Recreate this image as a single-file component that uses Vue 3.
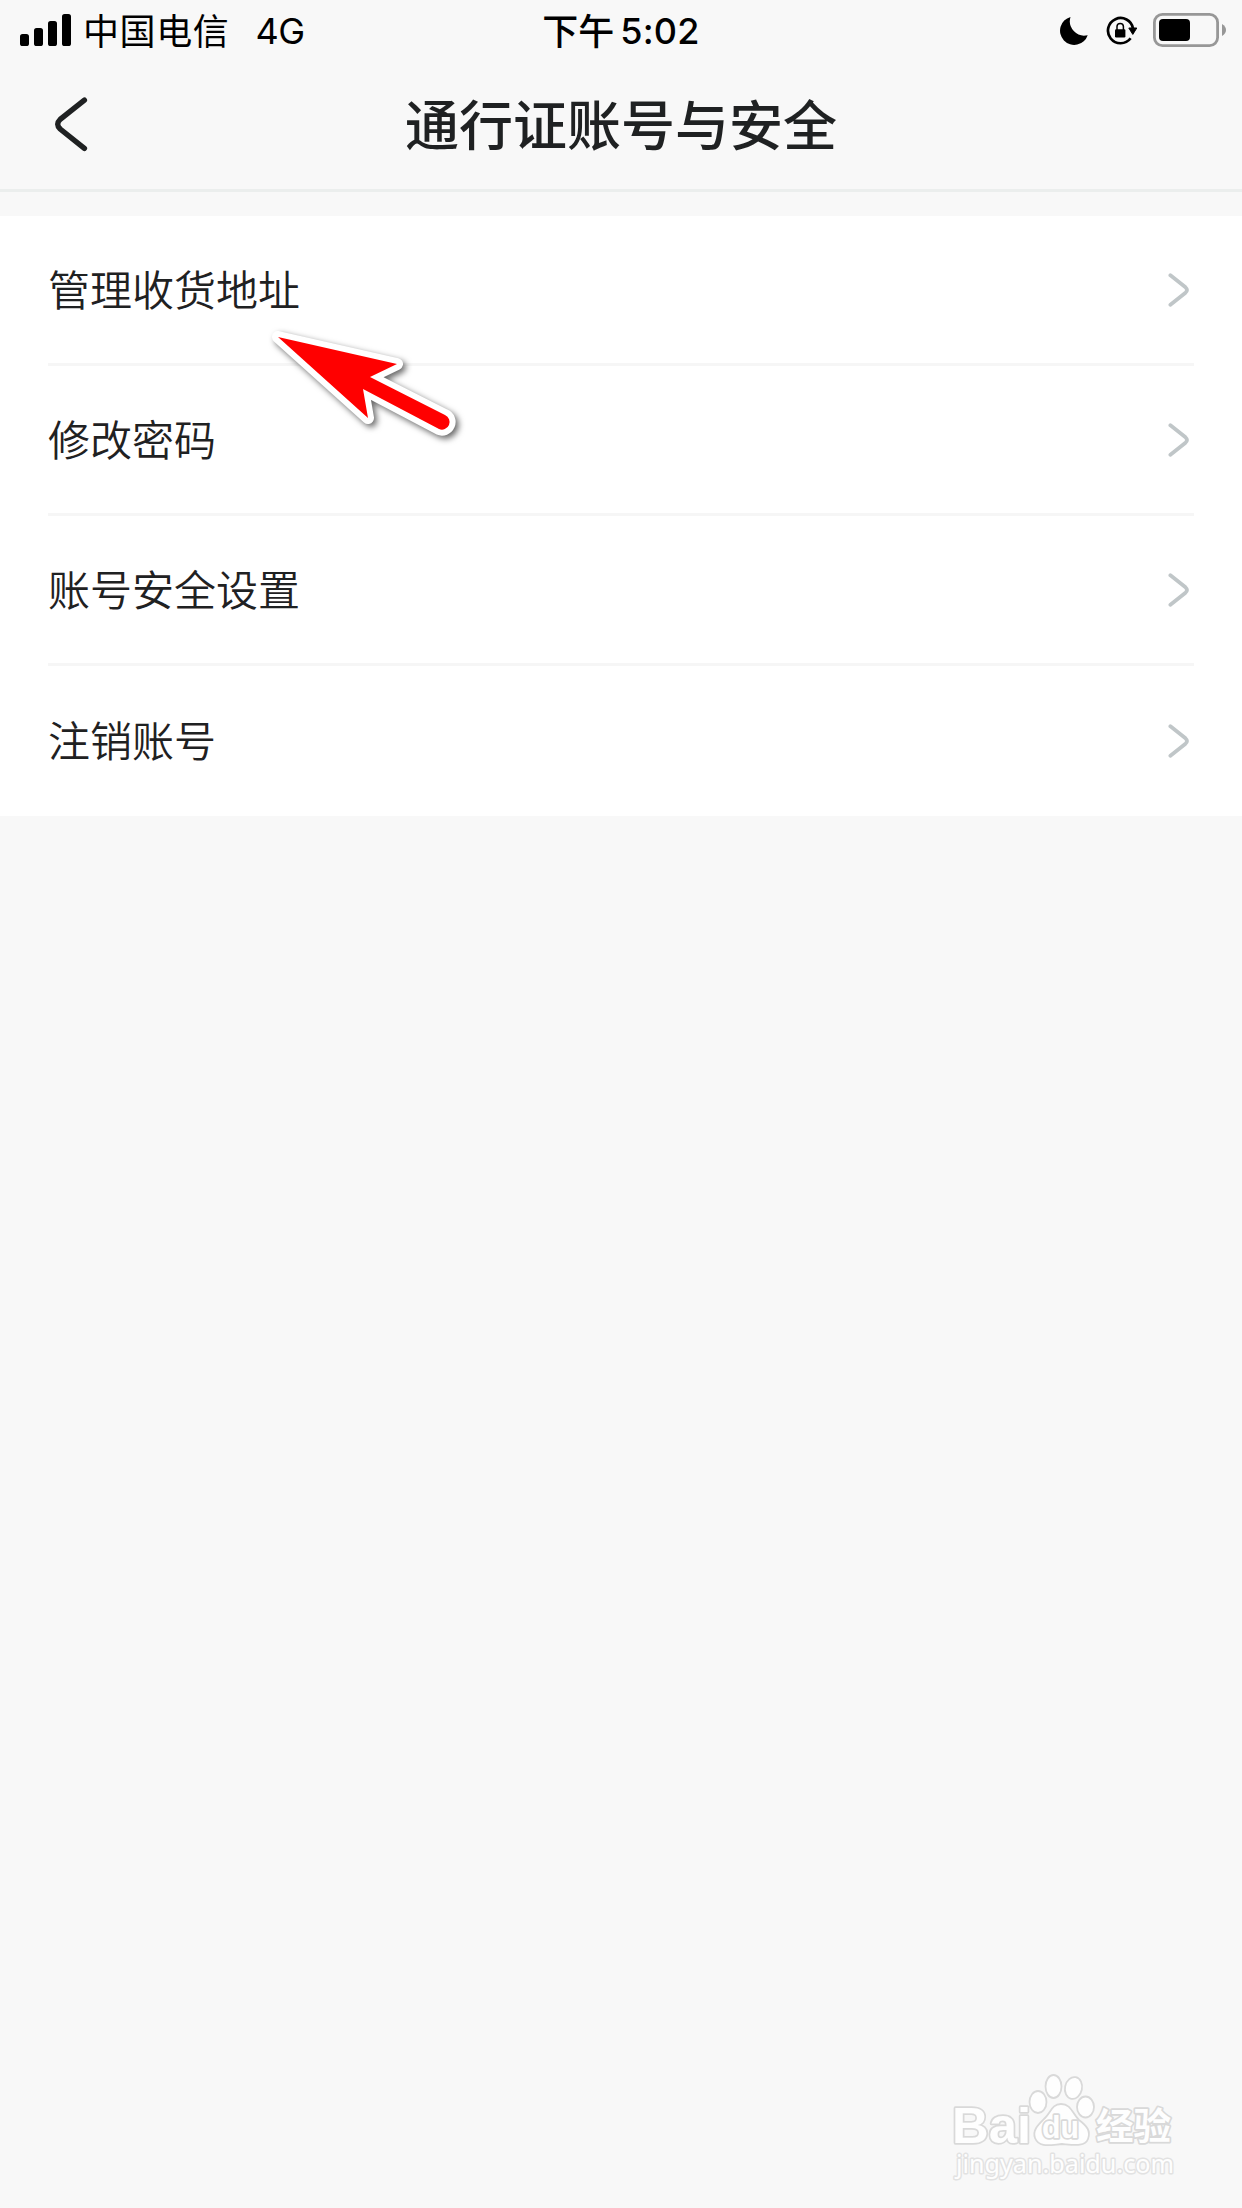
<template>
  <div class="page">
    <div class="status-bar">
      <div class="status-left">
        <svg class="signal" width="51" height="32" viewBox="0 0 51 32">
          <rect x="0" y="20" width="9" height="12" rx="2.6" />
          <rect x="14" y="14" width="9" height="18" rx="2.6" />
          <rect x="28" y="7" width="9" height="25" rx="2.6" />
          <rect x="42" y="0" width="9" height="32" rx="2.6" />
        </svg>
        <span class="carrier">中国电信</span>
        <span class="network">4G</span>
      </div>
      <div class="status-time">
        <span class="period">下午</span>
        <span class="clock">5:02</span>
      </div>
      <div class="status-right">
        <svg class="moon" width="28" height="28" viewBox="0 0 28 28">
          <path d="M10.5 0A14.2 14.2 0 1 0 27.7 18.2A14.4 14.4 0 0 1 10.5 0Z" />
        </svg>
        <svg class="lock" width="32" height="30" viewBox="0 0 32 30">
          <path d="M24.6 22.3A12.6 12.6 0 1 1 27 12.5" fill="none" stroke="#000" stroke-width="2.7" />
          <path d="M22.8 12H30.8L26.8 18.4Z" stroke="#000" stroke-linejoin="round" />
          <rect x="9" y="13.2" width="10.4" height="8.2" rx="1.2" />
          <path d="M11 14V10.6A3.2 3.2 0 0 1 17.4 10.6V14" fill="none" stroke="#000" stroke-width="1.5" />
        </svg>
        <svg class="battery" width="74" height="34" viewBox="0 0 74 34">
          <rect x="1.4" y="1.4" width="63.2" height="31.2" rx="8" fill="none" stroke="#979797" stroke-width="2.8" />
          <rect x="6" y="6" width="31" height="22" rx="4" />
          <path d="M69 11Q73 13.5 73 17T69 23Z" fill="#979797" />
        </svg>
      </div>
    </div>

    <header class="nav">
      <svg class="back" width="34" height="56" viewBox="0 0 34 56">
        <path d="M30.4 4.2L6.2 23.4Q1.2 28.2 6.2 33L30.4 52.4" />
      </svg>
      <h1>通行证账号与安全</h1>
    </header>

    <ul class="list">
      <li v-for="item in items" :key="item" class="item">
        <span>{{ item }}</span>
        <svg class="chevron" width="22" height="34" viewBox="0 0 22 34">
          <path d="M2.4 2.3L17.5 14.3Q20.5 17 17.5 19.7L2.4 31.8" />
        </svg>
      </li>
    </ul>

    <svg class="pointer" width="220" height="140" viewBox="0 0 220 140">
      <path class="outline" d="M18 17L137 44L110 57L185 95A7.3 7.3 0 0 1 179 109L103 69L108 98Z" />
      <path d="M18 17L137 44L110 57L185 95A7.3 7.3 0 0 1 179 109L103 69L108 98Z" fill="#f00" />
    </svg>

    <svg class="watermark" width="270" height="150" viewBox="0 0 270 150">
      <text class="brand" x="22" y="93" font-size="50" textLength="79" lengthAdjust="spacingAndGlyphs">Bai</text>
      <g class="paw">
        <ellipse cx="108" cy="52" rx="8.5" ry="11" />
        <ellipse cx="123.5" cy="36.5" rx="8" ry="11.5" />
        <ellipse cx="143.5" cy="38" rx="8.5" ry="11" transform="rotate(12 143.5 38)" />
        <ellipse cx="155.5" cy="57" rx="8.5" ry="10.5" />
        <path d="M131 54C141 54 142 63 149 70C157 76 161 81 158 89C155 97 144 95 132 94C120 95 109 98 105 88C102 80 109 74 115 68C121 62 122 54 131 54Z" />
      </g>
      <text class="du" x="112" y="88" font-size="31" textLength="37" lengthAdjust="spacingAndGlyphs">du</text>
      <text class="brand cjk" x="166" y="90" font-size="37" textLength="75" lengthAdjust="spacingAndGlyphs">经验</text>
      <text class="site" x="26" y="123" font-size="26" textLength="218" lengthAdjust="spacingAndGlyphs">jingyan.baidu.com</text>
    </svg>
  </div>
</template>

<script setup>
const items = [
  "管理收货地址",
  "修改密码",
  "账号安全设置",
  "注销账号"
];
</script>

<style>
body {
  margin: 0;
  background: #f8f8f8;
}
</style>

<style scoped>
.page {
  position: relative;
  width: 1242px;
  height: 2208px;
  overflow: hidden;
  background: #f8f8f8;
  color: #1f2122;
  font-family: "Noto Sans CJK SC", sans-serif;
}

.status-bar {
  display: grid;
  grid-template-columns: 1fr auto 1fr;
  align-items: center;
  height: 60px;
  color: #000;
  font-size: 36px;
  line-height: 60px;
}
.status-left,
.status-time,
.status-right {
  display: flex;
  align-items: center;
}
.status-left {
  padding-left: 20px;
}
.carrier {
  margin-left: 12px;
  padding-bottom: 2px;
  line-height: 58px;
  letter-spacing: 0.6px;
}
.network {
  margin-left: 26px;
  padding-top: 2px;
  line-height: 58px;
  font-family: Inter, sans-serif;
  letter-spacing: -0.5px;
}
.period {
  padding-bottom: 2px;
  line-height: 58px;
  font-weight: 500;
}
.clock {
  margin-left: 6px;
  padding-top: 2px;
  line-height: 58px;
  font-family: Inter, sans-serif;
  font-weight: 550;
  letter-spacing: 0.2px;
}
.status-right {
  justify-content: flex-end;
  padding-right: 15px;
}
.moon {
  margin-top: 2px;
}
.lock {
  margin-top: 2px;
  margin-left: 18px;
}
.battery {
  margin-left: 15px;
}

.nav {
  position: relative;
  display: flex;
  align-items: center;
  justify-content: center;
  height: 129px;
  border-bottom: 3px solid #ebeeed;
}
.nav h1 {
  margin: 0;
  padding-bottom: 4px;
  font-size: 54px;
  font-weight: 500;
  line-height: 80px;
}
.back {
  position: absolute;
  left: 54px;
  top: 36px;
}
.back path,
.chevron path {
  fill: none;
  stroke: #1f2122;
  stroke-width: 5.4;
  stroke-linecap: round;
}

.list {
  margin: 24px 0 0;
  padding: 0 48px;
  list-style: none;
  background: #fff;
}
.item {
  display: flex;
  align-items: center;
  justify-content: space-between;
  box-sizing: border-box;
  height: 150px;
  border-bottom: 3px solid #f6f6f6;
  font-size: 42px;
  font-weight: 350;
  line-height: 60px;
}
.item span {
  padding-bottom: 4px;
}
.item:last-child {
  border-bottom: 0;
}
.chevron {
  margin-right: 4px;
}
.chevron path {
  stroke: #c0c6c8;
  stroke-width: 3.8;
}

.pointer {
  position: absolute;
  left: 260px;
  top: 320px;
  filter: drop-shadow(3px 3px 3px rgba(0, 0, 0, 0.6));
}
.outline {
  fill: #fff;
  stroke: #fff;
  stroke-width: 12;
  stroke-linejoin: round;
}

.watermark {
  position: absolute;
  left: 930px;
  top: 2050px;
  fill: #fefefe;
  stroke: #d9d9d9;
  stroke-width: 1.8;
}
.watermark text {
  paint-order: stroke;
  stroke-width: 3.4;
  stroke-linejoin: round;
}
.brand {
  font-family: "Liberation Sans", sans-serif;
  font-weight: 700;
}
.brand.cjk {
  font-family: "Noto Sans CJK SC", sans-serif;
}
.du {
  font-family: "Liberation Sans", sans-serif;
  font-weight: 700;
}
.watermark .site {
  font-family: "Noto Sans", sans-serif;
  stroke: #e2e2e2;
  stroke-width: 3;
}
</style>
